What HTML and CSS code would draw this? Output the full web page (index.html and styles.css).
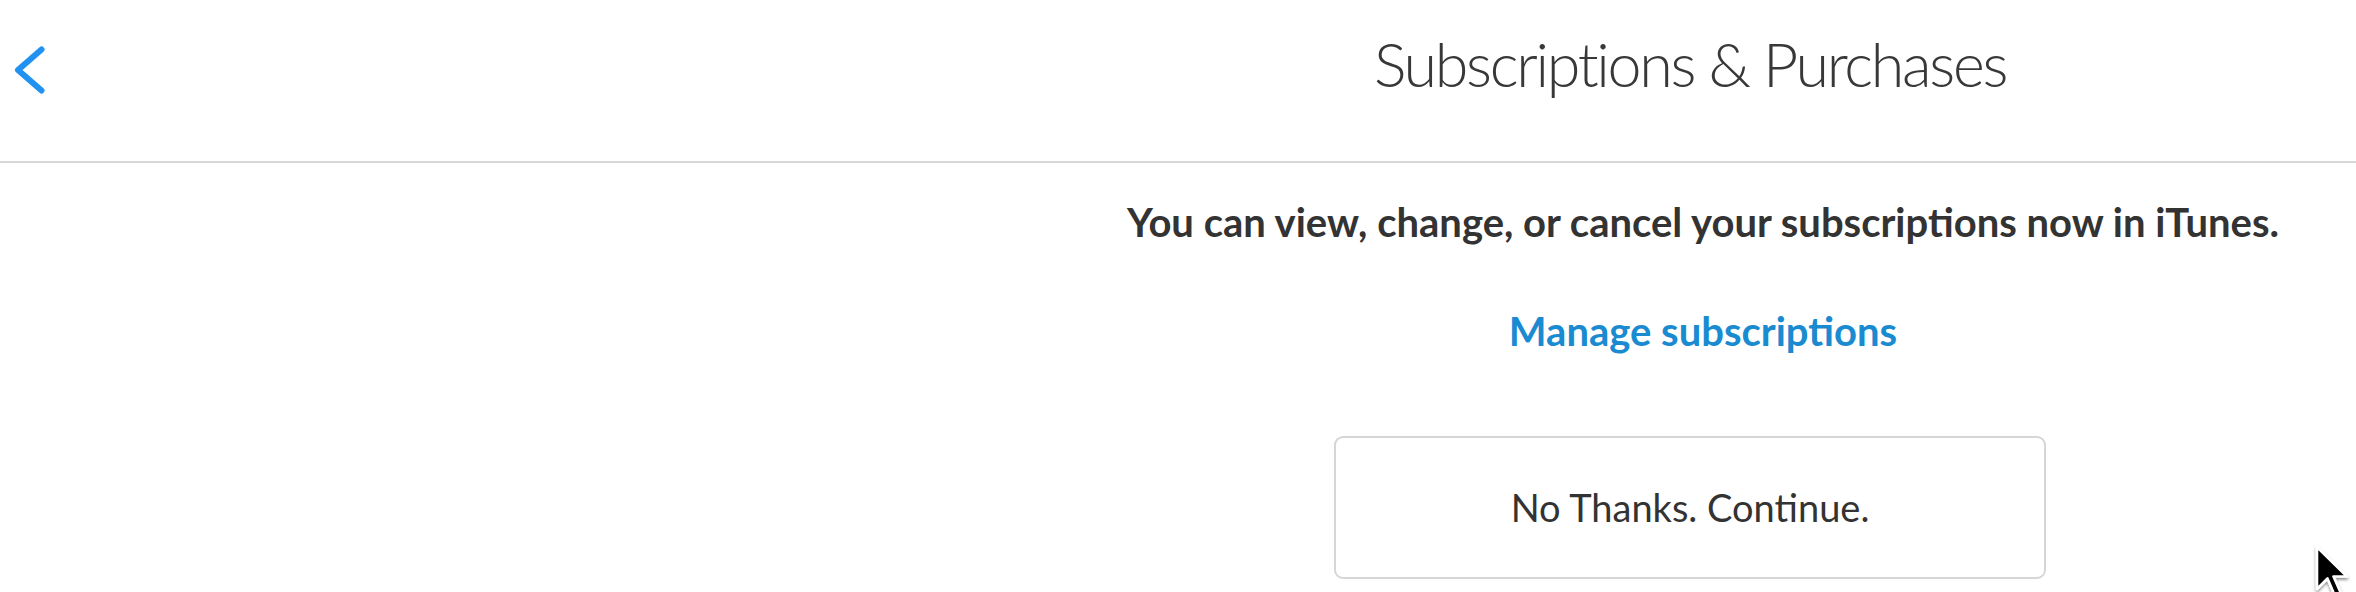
FILE: index.html
```html
<!DOCTYPE html>
<html lang="en">
<head>
<meta charset="utf-8">
<title>Subscriptions &amp; Purchases</title>
<link rel="stylesheet" href="styles.css">
</head>
<body>
<div class="page">
  <header class="header">
    <a class="back" href="#" aria-label="Back">
      <svg class="back-icon" width="60" height="60" viewBox="0 0 60 60" aria-hidden="true">
        <path d="M41.5 9.5 L18 30 L41.5 50.5" fill="none" stroke="#2192f2" stroke-width="6" stroke-linecap="round" stroke-linejoin="round"/>
      </svg>
    </a>
    <h1 class="title">Subscriptions &amp; Purchases</h1>
  </header>
  <main class="layout">
    <aside class="sidebar"></aside>
    <section class="content">
      <p class="message">You can view, change, or cancel your subscriptions now in iTunes.</p>
      <a class="manage" href="#">Manage subscriptions</a>
      <button class="continue" type="button">No Thanks. Continue.</button>
    </section>
  </main>
  <svg class="cursor" width="48" height="60" viewBox="0 0 48 60" aria-hidden="true">
    <defs>
      <filter id="sh" x="-30%" y="-30%" width="160%" height="160%">
        <feGaussianBlur in="SourceAlpha" stdDeviation="1.6"/>
        <feOffset dx="0" dy="2" result="b"/>
        <feComponentTransfer><feFuncA type="linear" slope="0.45"/></feComponentTransfer>
        <feMerge><feMergeNode/><feMergeNode in="SourceGraphic"/></feMerge>
      </filter>
    </defs>
    <path filter="url(#sh)" d="M5 4 L5 46 L15.5 35.5 L23 53 L29 50.5 L21.5 33.5 L35 33.5 Z" fill="#000" stroke="#fff" stroke-width="2.6" stroke-linejoin="round"/>
  </svg>
</div>
</body>
</html>
```
FILE: styles.css
```css
html, body {
  margin: 0;
  padding: 0;
  background: #ffffff;
}

body {
  font-family: Lato, "Open Sans", "Liberation Sans", sans-serif;
  color: #333333;
}

.page {
  position: relative;
  width: 2356px;
  height: 592px;
  overflow: hidden;
}

.header {
  display: grid;
  grid-template-columns: 1024px 1fr;
  align-items: start;
  height: 161px;
  border-bottom: 2px solid #d7d7d7;
  box-sizing: content-box;
}

.back {
  display: block;
  width: 60px;
  height: 60px;
  margin-top: 40px;
}

.back-icon {
  display: block;
}

.title {
  margin: 33px 0 0;
  font-family: Lato, "Open Sans", sans-serif;
  font-weight: 300;
  font-size: 61px;
  line-height: 61px;
  letter-spacing: -2.3px;
  color: #383838;
  text-align: center;
  white-space: nowrap;
}

.layout {
  display: grid;
  grid-template-columns: 1024px 1fr;
}

.content {
  display: flex;
  flex-direction: column;
  align-items: center;
}

.message {
  margin: 39px 0 0;
  padding-left: 26px;
  font-weight: 700;
  font-size: 40px;
  line-height: 40px;
  color: #333333;
  white-space: nowrap;
}

.manage {
  display: block;
  margin-top: 69px;
  padding-left: 26px;
  font-weight: 700;
  font-size: 40px;
  line-height: 40px;
  color: #1a8ad1;
  text-decoration: none;
  white-space: nowrap;
}

.continue {
  display: flex;
  align-items: center;
  justify-content: center;
  margin-top: 85px;
  width: 712px;
  height: 143px;
  box-sizing: border-box;
  border: 2px solid #d6d6d6;
  border-radius: 9px;
  background: #ffffff;
  font-family: Lato, "Open Sans", sans-serif;
  font-weight: 400;
  font-size: 38px;
  line-height: 38px;
  color: #333333;
  padding: 0 0 2px;
  cursor: default;
}

.cursor {
  position: absolute;
  left: 2312px;
  top: 543px;
}
```
